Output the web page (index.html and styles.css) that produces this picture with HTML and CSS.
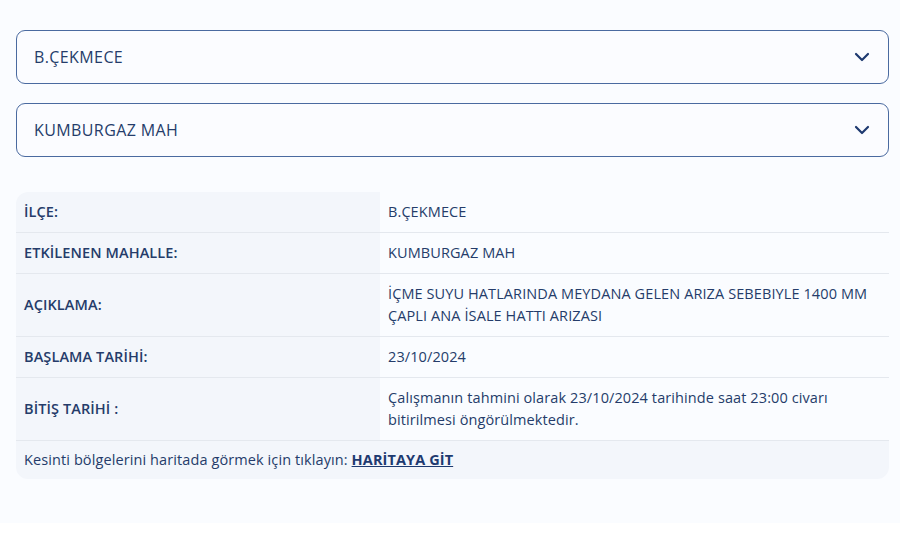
FILE: index.html
```html
<!DOCTYPE html>
<html lang="tr">
<head>
    <meta charset="UTF-8">
    <meta name="viewport" content="width=device-width, initial-scale=1.0">
    <title>Kesinti Bilgisi</title>
    <link rel="stylesheet" href="styles.css">
</head>
<body>
    <div class="page">
        <div class="select-box">
            <span>B.ÇEKMECE</span>
            <svg class="chevron" width="16" height="10" viewBox="0 0 16 10"><path d="M2 2 L8 8 L14 2" fill="none" stroke="#1e3a70" stroke-width="2.2" stroke-linecap="round" stroke-linejoin="round"/></svg>
        </div>
        <div class="select-box">
            <span>KUMBURGAZ MAH</span>
            <svg class="chevron" width="16" height="10" viewBox="0 0 16 10"><path d="M2 2 L8 8 L14 2" fill="none" stroke="#1e3a70" stroke-width="2.2" stroke-linecap="round" stroke-linejoin="round"/></svg>
        </div>

        <table class="info-table">
            <tr>
                <th>İLÇE:</th>
                <td>B.ÇEKMECE</td>
            </tr>
            <tr>
                <th>ETKİLENEN MAHALLE:</th>
                <td>KUMBURGAZ MAH</td>
            </tr>
            <tr>
                <th>AÇIKLAMA:</th>
                <td>İÇME SUYU HATLARINDA MEYDANA GELEN ARIZA SEBEBIYLE 1400 MM ÇAPLI ANA İSALE HATTI ARIZASI</td>
            </tr>
            <tr>
                <th>BAŞLAMA TARİHİ:</th>
                <td>23/10/2024</td>
            </tr>
            <tr>
                <th>BİTİŞ TARİHİ :</th>
                <td>Çalışmanın tahmini olarak 23/10/2024 tarihinde saat 23:00 civarı bitirilmesi öngörülmektedir.</td>
            </tr>
            <tr class="map-row">
                <td colspan="2">Kesinti bölgelerini haritada görmek için tıklayın: <a href="#">HARİTAYA GİT</a></td>
            </tr>
        </table>
    </div>
</body>
</html>
```

FILE: styles.css
```css
body {
    margin: 0;
    background-color: #fff;
    font-family: "Open Sans", "Noto Sans", sans-serif;
    color: #253c6a;
}
.page {
    background-color: #fafcff;
    height: 493px;
    padding: 30px 11px 0 16px;
}
.select-box {
    display: flex;
    align-items: center;
    justify-content: space-between;
    height: 52px;
    padding: 0 18px 0 17px;
    border: 1px solid #4a6aa0;
    border-radius: 9px;
    background-color: #fbfcff;
    font-size: 16px;
    letter-spacing: 0.4px;
    margin-bottom: 19px;
}
.chevron {
    display: block;
}
.info-table {
    width: 100%;
    margin-top: 35px;
    border-collapse: separate;
    border-spacing: 0;
    font-size: 14.5px;
    letter-spacing: 0.1px;
    line-height: 22px;
}
.info-table th,
.info-table td {
    padding: 9px 12px 9px 8px;
    text-align: left;
    vertical-align: middle;
    border-bottom: 1px solid #e4e8ee;
}
.info-table th {
    width: 344px;
    background-color: #f3f6fb;
    font-weight: 600;
}
.info-table td {
    background-color: #fafcff;
    font-weight: 400;
}
.info-table tr:first-child th {
    border-top-left-radius: 12px;
}
.info-table .map-row td {
    background-color: #f3f6fb;
    border-bottom: none;
    padding: 8px 8px;
    border-radius: 0 0 12px 12px;
}
.map-row a {
    color: #1e3a70;
    font-weight: 700;
}
```
